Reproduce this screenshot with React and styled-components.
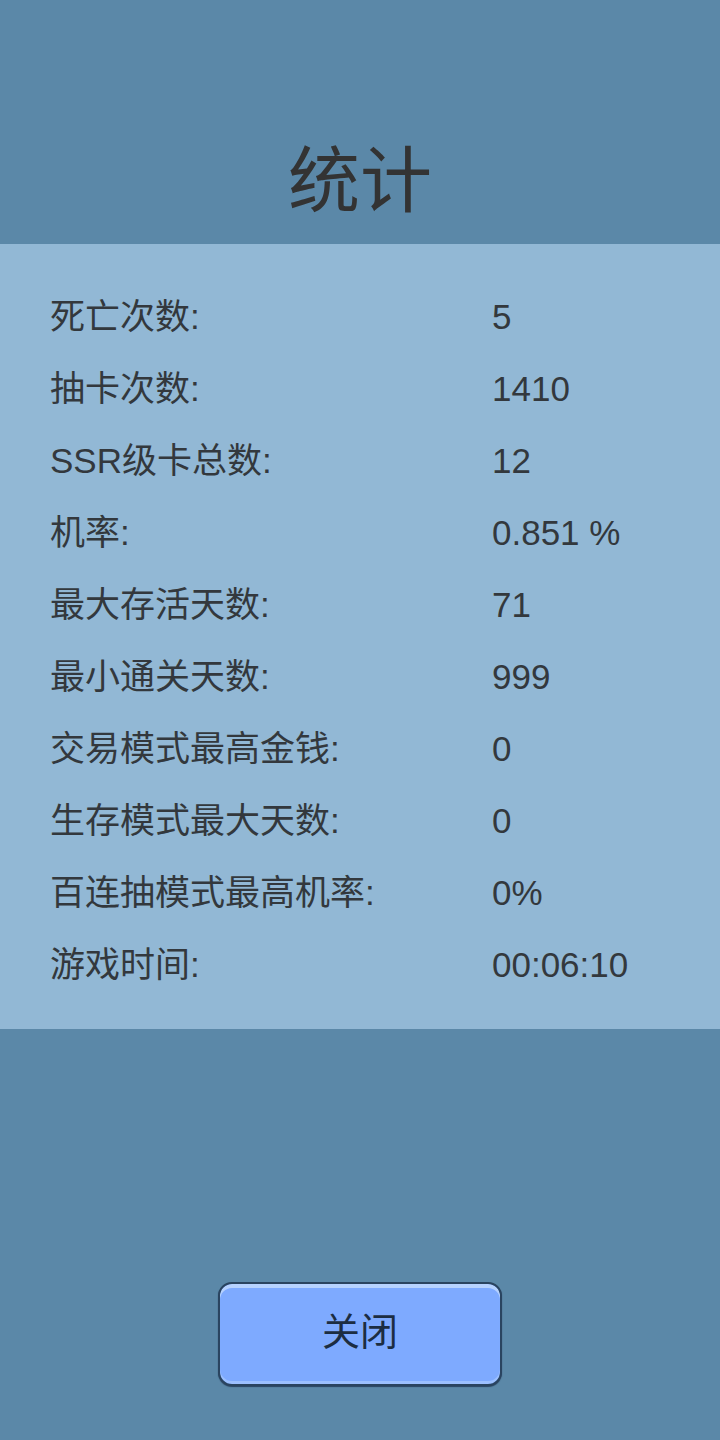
import React from "react";
import styled, { createGlobalStyle } from "styled-components";

const Global = createGlobalStyle`
  html, body { margin: 0; padding: 0; }
  body { background: #5b88a8; font-family: "Liberation Sans", "Noto Sans CJK SC", sans-serif; }
`;

const Screen = styled.div`
  width: 720px;
  height: 1440px;
  display: flex;
  flex-direction: column;
  background: #5b88a8;
  color: #33383d;
`;

const Header = styled.div`
  height: 244px;
  box-sizing: border-box;
  display: flex;
  align-items: flex-end;
  justify-content: center;
  padding-bottom: 33px;
`;

const Title = styled.h1`
  margin: 0;
  font-size: 72px;
  line-height: 72px;
  font-weight: 400;
  font-family: "Noto Sans CJK SC", sans-serif;
  color: #333333;
`;

const Panel = styled.div`
  background: #92b8d5;
  padding: 37px 0 28px 50px;
  display: flex;
  flex-direction: column;
`;

const Row = styled.div`
  height: 72px;
  display: grid;
  grid-template-columns: 442px 1fr;
  align-items: center;
  font-size: 35px;
  line-height: 40px;
`;

const Label = styled.span`
  font-family: "Liberation Sans", "Noto Sans CJK SC", sans-serif;
`;

const Value = styled.span`
  font-family: "Liberation Sans", sans-serif;
`;

const Footer = styled.div`
  flex: 1;
  display: flex;
  justify-content: center;
  padding-top: 253px;
`;

const Button = styled.button`
  width: 284px;
  height: 104px;
  box-sizing: border-box;
  border: 2px solid #2a4460;
  border-radius: 14px;
  background: #7eaaff;
  box-shadow: inset 0 4px 0 #b6d2ff, inset 0 -3px 0 #9cc0ff, 0 1px 1px #2a4460;
  font-family: "Noto Sans CJK SC", sans-serif;
  font-size: 38px;
  line-height: 44px;
  color: #1c2d42;
  padding: 0 0 10px;
  cursor: pointer;
`;

const stats = [
  ["死亡次数:", "5"],
  ["抽卡次数:", "1410"],
  ["SSR级卡总数:", "12"],
  ["机率:", "0.851 %"],
  ["最大存活天数:", "71"],
  ["最小通关天数:", "999"],
  ["交易模式最高金钱:", "0"],
  ["生存模式最大天数:", "0"],
  ["百连抽模式最高机率:", "0%"],
  ["游戏时间:", "00:06:10"],
];

export default function App() {
  return (
    <Screen>
      <Global />
      <Header>
        <Title>统计</Title>
      </Header>
      <Panel>
        {stats.map(([l, v]) => (
          <Row key={l}>
            <Label>{l}</Label>
            <Value>{v}</Value>
          </Row>
        ))}
      </Panel>
      <Footer>
        <div>
          <Button>关闭</Button>
        </div>
      </Footer>
    </Screen>
  );
}
